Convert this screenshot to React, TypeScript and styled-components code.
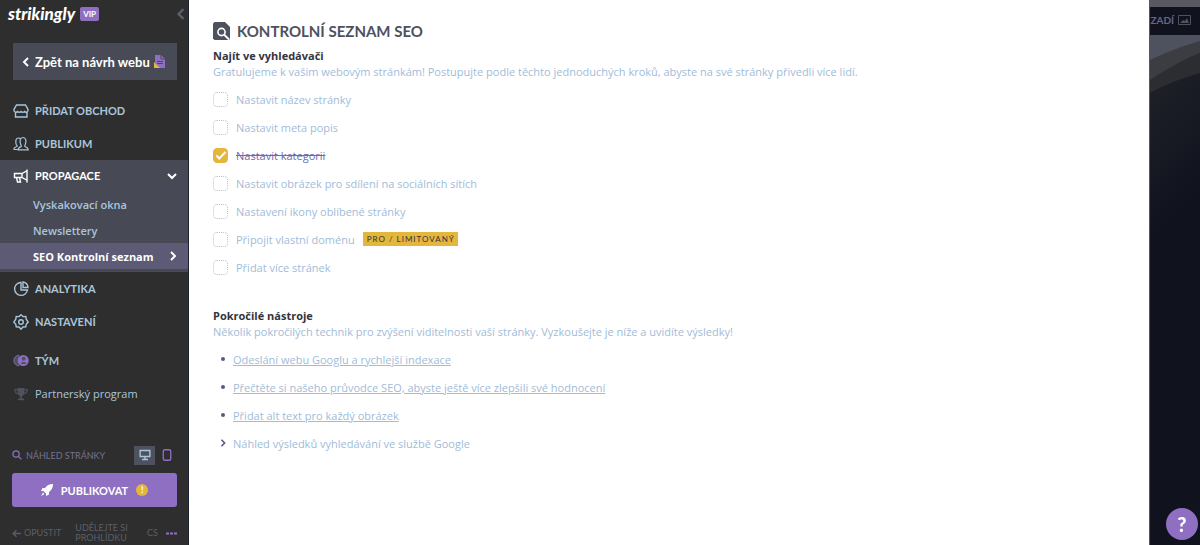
import React from 'react';
import styled, { createGlobalStyle } from 'styled-components';

const c = {
  bg: '#2e2e2e',
  slate: '#4e515e',
  purple: '#8e6fc1',
  blue: '#a9c6dc',
  link: '#9fbcd8',
  yellow: '#e5b63c',
  navy: '#10131e',
};
const brand = `Lato, "Liberation Sans", sans-serif`;
const text = `"Open Sans", "Noto Sans", sans-serif`;

const Global = createGlobalStyle`
  *, *::before, *::after { box-sizing: border-box; }
  body { margin: 0; font-family: ${text}; font-size: 11px; background: #fff; }
  button { font: inherit; color: inherit; border: 0; padding: 0; background: none; cursor: pointer; }
  ul, h1, h2, p { margin: 0; padding: 0; list-style: none; }
  svg { display: block; flex: none; }
`;

const Page = styled.div`
  display: grid;
  grid-template-columns: 189px 1fr 51px;
  min-height: 100vh;
`;
const Sidebar = styled.aside`
  display: flex;
  flex-direction: column;
  background: ${c.bg};
  color: ${c.blue};
  font-family: ${brand};
  border-right: 1px solid #1d2230;
`;
const Header = styled.header`
  display: flex;
  align-items: center;
  gap: 5px;
  height: 28px;
  padding: 0 1px 0 8px;
`;
const Logo = styled.span`
  color: #fff;
  font-size: 17px;
  line-height: 20px;
  font-weight: 900;
  font-style: italic;
`;
const Vip = styled.span`
  padding: 0 3px;
  border-radius: 2px;
  background: ${c.purple};
  color: #fff;
  font-size: 8px;
  line-height: 14px;
  font-weight: 700;
`;
const Collapse = styled.button`
  margin-left: auto;
  color: #5b5e6b;
`;
const BackButton = styled.button`
  display: flex;
  align-items: center;
  gap: 4px;
  height: 37px;
  margin: 15px 11px 14px 13px;
  padding-left: 8px;
  background: #484b56;
  color: #fff;
  font-size: 13px;
  font-weight: 700;
`;
const Nav = styled.nav`
  display: flex;
  flex-direction: column;
`;
const NavItem = styled.a<{ $active?: boolean; $plain?: boolean }>`
  display: flex;
  align-items: center;
  gap: 6px;
  height: ${(p) => (p.$active ? 31 : 33)}px;
  padding: 0 11px 0 13px;
  color: ${(p) => (p.$active ? '#fff' : c.blue)};
  font-family: ${(p) => (p.$plain ? text : brand)};
  font-size: 11px;
  font-weight: ${(p) => (p.$plain ? 400 : 700)};
  text-decoration: none;
  svg:last-child:not(:first-child) { margin-left: auto; }
`;
const Group = styled.div`
  padding-bottom: 3px;
  background: #474a54;
`;
const SubItem = styled.a<{ $active?: boolean }>`
  display: flex;
  align-items: center;
  justify-content: space-between;
  height: 26px;
  padding: 0 10px 0 33px;
  background: ${(p) => (p.$active ? '#5c5a75' : 'transparent')};
  color: ${(p) => (p.$active ? '#fff' : c.blue)};
  font-family: ${text};
  font-weight: ${(p) => (p.$active ? 700 : 600)};
  text-decoration: none;
`;
const TeamNav = styled(Nav)`
  margin-top: 6px;
`;
const Bottom = styled.div`
  margin-top: auto;
  padding: 0 11px 0 12px;
`;
const Preview = styled.div`
  display: flex;
  align-items: center;
  gap: 4px;
  height: 20px;
  color: ${c.purple};
  font-size: 9px;
`;
const PreviewLabel = styled.span`
  flex: 1;
  color: #77718f;
`;
const Devices = styled.div`
  display: flex;
  gap: 1px;
`;
const Device = styled.button<{ $on?: boolean }>`
  display: grid;
  place-items: center;
  width: 21px;
  height: 19px;
  background: ${(p) => (p.$on ? c.slate : 'none')};
  color: ${(p) => (p.$on ? c.blue : c.purple)};
`;
const Publish = styled.button`
  display: flex;
  align-items: center;
  justify-content: center;
  gap: 8px;
  width: 100%;
  height: 34px;
  margin: 8px 0 14px;
  border-radius: 3px;
  background: ${c.purple};
  color: #fff;
  font-size: 11px;
  font-weight: 700;
`;
const Alert = styled.span`
  width: 12px;
  border-radius: 6px;
  background: ${c.yellow};
  font-size: 9px;
  line-height: 12px;
`;
const Footer = styled.footer`
  display: flex;
  align-items: center;
  gap: 14px;
  height: 24px;
  color: #5b5e6b;
  font-size: 9px;
  line-height: 10px;
`;
const FootButton = styled.button`
  display: flex;
  align-items: center;
  gap: 3px;
  text-align: left;
`;
const FootEnd = styled.div`
  display: flex;
  align-items: center;
  gap: 8px;
  margin-left: auto;
`;

const Main = styled.main`
  padding: 19px 24px;
  background: #fff;
  color: ${c.link};
`;
const Title = styled.h1`
  display: flex;
  align-items: center;
  gap: 7px;
  height: 24px;
  margin-bottom: 5px;
  color: ${c.slate};
  font-family: ${brand};
  font-size: 15px;
  line-height: 18px;
  font-weight: 700;
`;
const Subtitle = styled.h2`
  color: #34343e;
  font-size: 11px;
  line-height: 16px;
  font-weight: 700;
`;
const Intro = styled.p`
  margin-bottom: 5px;
  line-height: 16px;
`;
const Check = styled.li`
  display: flex;
  align-items: center;
  height: 28px;
`;
const CheckLabel = styled.label<{ $done?: boolean }>`
  display: flex;
  align-items: center;
  gap: 8px;
  color: ${(p) => (p.$done ? '#6f6ba6' : c.link)};
  span { text-decoration: ${(p) => (p.$done ? 'line-through' : 'none')}; }
`;
const Box = styled.input`
  appearance: none;
  display: grid;
  place-items: center;
  width: 15px;
  height: 15px;
  margin: 0;
  border: 1px dotted ${c.blue};
  border-radius: 4px;
  &:checked { border: 1px solid ${c.yellow}; background: ${c.yellow}; }
  &:checked::after {
    content: '';
    width: 10px;
    height: 5px;
    border: solid #fff;
    border-width: 0 0 2px 2px;
    transform: translateY(-1px) rotate(-45deg);
  }
`;
const Pro = styled.span`
  margin-left: 8px;
  padding: 0 3px 0 4px;
  background: ${c.yellow};
  color: #34343e;
  font-family: ${brand};
  font-size: 8px;
  line-height: 14px;
  letter-spacing: 1px;
`;
const Tools = styled.section`
  margin-top: 27px;
`;
const Tool = styled.li`
  display: flex;
  align-items: center;
  gap: 6px;
  height: 28px;
  padding-left: 6px;
  color: #5b5784;
  a { color: ${c.link}; text-underline-offset: 1px; }
  button { color: ${c.link}; }
`;
const Marker = styled.span`
  display: grid;
  place-items: center;
  width: 8px;
  height: 8px;
  &::before { content: ''; width: 4px; height: 4px; border-radius: 2px; background: currentColor; }
`;

const Backdrop = styled.aside`
  display: flex;
  flex-direction: column;
  overflow: hidden;
  background: ${c.navy};
  border-left: 1px solid #5d4f86;
`;
const TopStrip = styled.div`
  height: 7px;
  background: #5a5860;
`;
const BackgroundButton = styled.button`
  display: flex;
  align-items: center;
  justify-content: flex-end;
  gap: 4px;
  height: 26px;
  margin-bottom: 2px;
  padding-right: 9px;
  color: #6a6488;
  font-family: ${brand};
  font-size: 10px;
  font-weight: 700;
`;
const Help = styled.button`
  position: fixed;
  right: 2px;
  bottom: 5px;
  width: 32px;
  height: 32px;
  border-radius: 16px;
  background: ${c.purple};
  color: #fff;
  font-family: ${brand};
  font-size: 20px;
  font-weight: 900;
`;

const Icon = ({ children, size = 16, w = 1.4 }: { children: React.ReactNode; size?: number; w?: number }) => (
  <svg width={size} height={size} viewBox="0 0 16 16" fill="none" stroke="currentColor" strokeWidth={w} aria-hidden="true">
    {children}
  </svg>
);
const Chevron = ({ d, size = 10 }: { d: 'left' | 'right' | 'down'; size?: number }) => (
  <svg width={size} height={size} viewBox="0 0 10 10" fill="none" stroke="currentColor" strokeWidth="2" aria-hidden="true">
    <path d={{ left: 'M7 1 3 5l4 4', right: 'M3 1l4 4-4 4', down: 'M1 3l4 4 4-4' }[d]} />
  </svg>
);

const checks = [
  { label: 'Nastavit název stránky' },
  { label: 'Nastavit meta popis' },
  { label: 'Nastavit kategorii', done: true },
  { label: 'Nastavit obrázek pro sdílení na sociálních sítích' },
  { label: 'Nastavení ikony oblíbené stránky' },
  { label: 'Připojit vlastní doménu', pro: true },
  { label: 'Přidat více stránek' },
];
const tools = [
  'Odeslání webu Googlu a rychlejší indexace',
  'Přečtěte si našeho průvodce SEO, abyste ještě více zlepšili své hodnocení',
  'Přidat alt text pro každý obrázek',
];

export default function App() {
  return (
    <>
      <Global />
      <Page>
        <Sidebar>
          <Header>
            <Logo>strikingly</Logo>
            <Vip>VIP</Vip>
            <Collapse aria-label="Sbalit"><Chevron d="left" size={12} /></Collapse>
          </Header>
          <BackButton>
            <Chevron d="left" />
            Zpět na návrh webu
            <svg width="12" height="13" viewBox="0 0 12 13" aria-hidden="true">
              <path d="M1 0h6l4 4v9H1z" fill={c.purple} />
              <path d="M7 0v4h4M3 6.500h6M3 8.500h6" stroke="#484b56" fill="none" />
              <path d="M0 7l6 6H0z" fill={c.yellow} />
            </svg>
          </BackButton>
          <Nav>
            <NavItem href="#">
              <Icon><path d="M3.500 2h9l2.500 4.500v1a2 2 0 0 1-3.500 1 2.500 2.500 0 0 1-3.500 0 2.500 2.500 0 0 1-3.500 0 2 2 0 0 1-3.500-1v-1zM2.500 9v5h11.500V9" /></Icon>
              PŘIDAT OBCHOD
            </NavItem>
            <NavItem href="#">
              <Icon w={1.2}><path d="M4.500 10.500C3 9 2.500 7 2.800 5 3 2.800 4 2 5.500 2c1 0 1.500.3 2 .8M.8 13.500c0-2 1-2.500 3.700-3M.8 13.500H5M5.200 13.800c0-2 1-2.600 3-3.200.6-.6 0-1-.5-2C6.500 5 7 1.500 10 1.500S13.500 5 12.300 8.500c-.5 1-1 1.400-.4 2 2 .7 3.300 1.300 3.300 3.300z" /></Icon>
              PUBLIKUM
            </NavItem>
            <Group>
              <NavItem href="#" $active>
                <Icon><path d="M14 1.500v13M13.500 3L9 5.500H1.500v4H9l4.500 2.500M3.500 9.500l1 4.500h3L6.500 9.500M9 5.500v4" /></Icon>
                PROPAGACE
                <Chevron d="down" />
              </NavItem>
              <SubItem href="#">Vyskakovací okna</SubItem>
              <SubItem href="#">Newslettery</SubItem>
              <SubItem href="#" $active>SEO Kontrolní seznam<Chevron d="right" /></SubItem>
            </Group>
            <NavItem href="#">
              <Icon><path d="M7 1.500a6.500 6.500 0 1 0 7.500 7.500H8V1.500zM10 1v5.500h5C14.800 3.500 13 1.500 10 1z" /></Icon>
              ANALYTIKA
            </NavItem>
            <NavItem href="#">
              <Icon><path d="M8 .8l2 1.800 2.800-.2.400 2.800 2 2.800-2 2.200-.4 2.600-2.800.200-2 2.200-2-2.200-2.800-.200-.4-2.600-2-2.200 2-2.800.4-2.800 2.800.2z" /><circle cx="8" cy="8" r="2.300" /></Icon>
              NASTAVENÍ
            </NavItem>
          </Nav>
          <TeamNav>
            <NavItem href="#">
              <svg width="16" height="13" viewBox="0 0 18 14" aria-hidden="true">
                <path d="M7 1a6 6 0 0 0 0 12" fill={c.slate} stroke={c.purple} />
                <circle cx="11.500" cy="7" r="6.200" fill={c.purple} />
                <circle cx="12" cy="5" r="2.200" fill={c.slate} />
                <path d="M9 11c0-3 6-3 6 0" fill={c.slate} />
              </svg>
              TÝM
            </NavItem>
            <NavItem href="#" $plain>
              <svg width="16" height="14" viewBox="0 0 16 16" fill={c.slate} aria-hidden="true">
                <path d="M4 1h8v4c0 3-1.500 5-3 5.500V13h2.500v2h-7v-2H7v-2.500C5.500 10 4 8 4 5z" />
                <path d="M4 3H1c0 3 1.500 4.500 4 5M12 3h3c0 3-1.500 4.500-4 5" fill="none" stroke={c.slate} strokeWidth="1.400" />
              </svg>
              Partnerský program
            </NavItem>
          </TeamNav>
          <Bottom>
            <Preview>
              <Icon size={10} w={2}><circle cx="6.500" cy="6.500" r="5" /><path d="M10 10l5 5" /></Icon>
              <PreviewLabel>NÁHLED STRÁNKY</PreviewLabel>
              <Devices>
                <Device $on aria-label="Počítač"><Icon size={12} w={1.8}><path d="M1.500 2h13v8h-13zM8 10v4M4 14h8" /></Icon></Device>
                <Device aria-label="Mobil"><Icon size={12} w={1.8}><rect x="3" y="1" width="10" height="14" rx="2" /></Icon></Device>
              </Devices>
            </Preview>
            <Publish>
              <svg width="12" height="12" viewBox="0 0 12 12" fill="#fff" aria-hidden="true">
                <path d="M12 0C8 0 6 1.500 4 4H1.500L0 7h2.500L5 9.500V12l3-1.500V8c2.500-2 4-4 4-8zM2 8.500L0 12l3.500-2z" />
              </svg>
              PUBLIKOVAT
              <Alert>!</Alert>
            </Publish>
            <Footer>
              <FootButton><Icon size={9} w={2.4}><path d="M16 8H2M8 2L2 8l6 6" /></Icon>OPUSTIT</FootButton>
              <FootButton>UDĚLEJTE SI<br />PROHLÍDKU</FootButton>
              <FootEnd>
                <FootButton>CS</FootButton>
                <FootButton aria-label="Více">
                  <svg width="11" height="3" viewBox="0 0 11 3" fill={c.purple}><path d="M0 .5h3v2H0zM4 .5h3v2H4zM8 .5h3v2H8z" /></svg>
                </FootButton>
              </FootEnd>
            </Footer>
          </Bottom>
        </Sidebar>
        <Main>
          <Title>
            <svg width="17" height="18" viewBox="0 0 17 18" aria-hidden="true">
              <path d="M1.500 0H12l5 5v11.500l-1 1.500H1.500L0 16.500v-15z" fill={c.slate} />
              <circle cx="8.500" cy="10" r="3.600" fill="none" stroke="#fff" strokeWidth="1.600" />
              <path d="M11 12.500l5 5" stroke="#fff" strokeWidth="1.800" />
            </svg>
            KONTROLNÍ SEZNAM SEO
          </Title>
          <Subtitle>Najít ve vyhledávači</Subtitle>
          <Intro>Gratulujeme k vašim webovým stránkám! Postupujte podle těchto jednoduchých kroků, abyste na své stránky přivedli více lidí.</Intro>
          <ul>
            {checks.map((k) => (
              <Check key={k.label}>
                <CheckLabel $done={k.done}><Box type="checkbox" defaultChecked={k.done} /><span>{k.label}</span></CheckLabel>
                {k.pro && <Pro>PRO / LIMITOVANÝ</Pro>}
              </Check>
            ))}
          </ul>
          <Tools>
            <Subtitle>Pokročilé nástroje</Subtitle>
            <Intro>Několik pokročilých technik pro zvýšení viditelnosti vaší stránky. Vyzkoušejte je níže a uvidíte výsledky!</Intro>
            <ul>
              {tools.map((t) => <Tool key={t}><Marker /><a href="#">{t}</a></Tool>)}
              <Tool><Chevron d="right" size={8} /><button>Náhled výsledků vyhledávání ve službě Google</button></Tool>
            </ul>
          </Tools>
        </Main>
        <Backdrop>
          <TopStrip />
          <BackgroundButton>
            ZADÍ
            <svg width="13" height="10" viewBox="0 0 13 10" aria-hidden="true"><path d="M.5.500h12v9H.5z" fill="none" stroke={c.slate} /><path d="M2 8l3-3 2 1 2-3 2 5z" fill={c.slate} /></svg>
          </BackgroundButton>
          <svg width="100%" height="215" viewBox="0 0 50 215" preserveAspectRatio="none" aria-hidden="true">
            <defs>
              <linearGradient id="night" x1="0" y1="0" x2="0.25" y2="1">
                <stop offset="0.2" stopColor="#1f2128" />
                <stop offset="0.9" stopColor={c.navy} />
              </linearGradient>
            </defs>
            <path d="M0 0h50v215H0z" fill="url(#night)" />
            <path d="M0 0h50v38C30 44 14 50 0 58z" fill="#2c2d30" />
            <path d="M0 0h50v18C30 26 14 36 0 45z" fill="#3b3d43" />
            <path d="M0 0h50v6C30 12 14 18 0 25z" fill={c.slate} />
          </svg>
        </Backdrop>
      </Page>
      <Help aria-label="Nápověda">?</Help>
    </>
  );
}
